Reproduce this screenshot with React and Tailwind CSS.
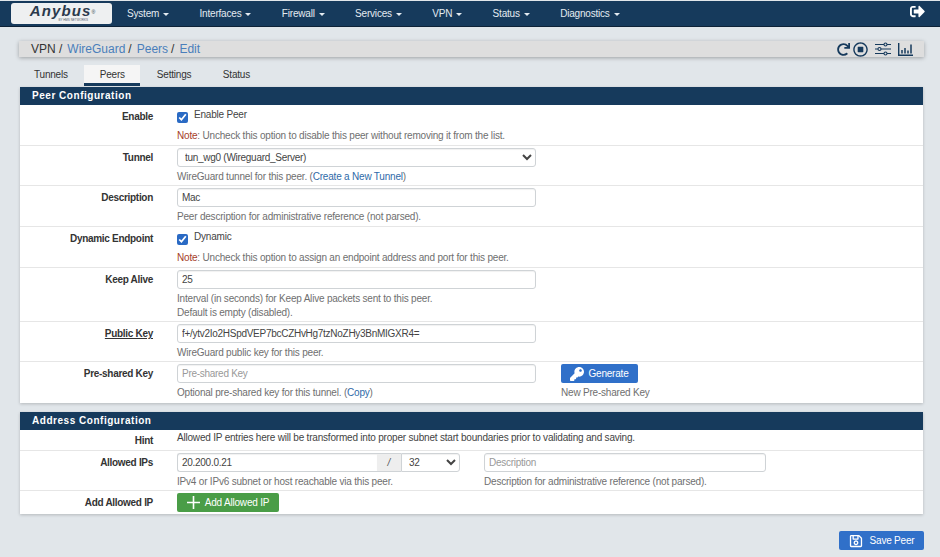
import { FaKey, FaRedo, FaRegSave, FaRegStopCircle, FaSignOutAlt } from "react-icons/fa";

const NAV = ["System", "Interfaces", "Firewall", "Services", "VPN", "Status", "Diagnostics"];
const TABS = ["Tunnels", "Peers", "Settings", "Status"];

const inputCls = "h-[19px] rounded-[3px] border border-[#cfd3d6] bg-white px-[4px] text-[10px] tracking-[-0.28px] text-[#444] shadow-[inset_0_1px_1px_rgba(0,0,0,0.06)] outline-none placeholder:text-[#999]";

function Help({ children }) {
  return <div className="mt-[3px] h-[14px] text-[10px] leading-[14px] tracking-[-0.2px] text-[#6f6f6f]">{children}</div>;
}

// pb: row bottom padding, the rows in the picture are not all the same height
function Row({ label, underline, children, last, pb = "pb-[2px]" }) {
  return (
    <div className={`flex ${last ? "" : "border-b border-[#e6e6e6]"}`}>
      <div className={`mt-[5px] w-[133px] shrink-0 text-right text-[10px] font-bold leading-[14px] tracking-[-0.3px] text-[#333] ${underline ? "underline" : ""}`}>
        {label}
      </div>
      <div className={`ml-[24px] min-w-0 flex-1 pt-[2px] ${pb}`}>{children}</div>
    </div>
  );
}

function Check({ label }) {
  return (
    <div className="flex h-[19px] items-start">
      <input type="checkbox" defaultChecked className="mt-[5px] h-[11px] w-[11px] accent-[#2a6ac4]" />
      <span className="ml-[6px] mt-[1px] text-[10px] leading-[14px] tracking-[-0.2px] text-[#444]">{label}</span>
    </div>
  );
}

function Note({ children }) {
  return <Help><span className="text-[#a5402a]">Note</span>: {children}</Help>;
}

function Heading({ children }) {
  return (
    <div className="h-[18px] border-b border-[#163a5c] bg-[#163a5c] pl-[12px] text-[10px] font-bold leading-[17px] tracking-[0.53px] text-white">
      {children}
    </div>
  );
}

function Sliders() {
  return (
    <svg width="16" height="14" viewBox="0 0 16 14" fill="none" stroke="#163a5c" strokeWidth="1.1">
      <path d="M0 2.5h9M12 2.5h4M0 7h3M6 7h10M0 11.5h9M12 11.5h4" />
      <circle cx="10.5" cy="2.5" r="1.5" />
      <circle cx="4.5" cy="7" r="1.5" />
      <circle cx="10.5" cy="11.5" r="1.5" />
    </svg>
  );
}

function Chart() {
  return (
    <svg width="15" height="13" viewBox="0 0 15 13" fill="none" stroke="#163a5c">
      <path d="M.7 0v12.2H15" strokeWidth="1.4" />
      <path d="M4 10.5V7M7 10.5V5M10 10.5V7.5M13 10.5V1.5" strokeWidth="1.5" />
    </svg>
  );
}

export default function App() {
  return (
    <div className="h-[557px] w-[940px] overflow-hidden bg-[#e1e6ea] font-['Liberation_Sans',Arial,sans-serif]">
      {/* top nav */}
      <div className="mt-[1px] flex h-[26px] items-start border-b border-[#0d2237] bg-[#163a5c] pt-[2px]">
        <div className="ml-[11px] flex h-[21px] w-[101px] flex-col items-center rounded-[3px] bg-[#eef0f1] pl-[3px]">
          <div className="text-[15px] font-bold italic leading-[15px] tracking-[1.1px] text-[#2b3a4c]">
            Anybus<sup className="text-[5px] font-normal">®</sup>
          </div>
          <div className="mt-[1px] self-end pr-[24px] text-[3px] leading-[3px] text-[#55606c]">BY HMS NETWORKS</div>
        </div>
        <div className="ml-[15px] flex gap-[30.4px] pt-[4px]">
          {NAV.map(n => (
            <div key={n} className="flex items-center text-[10px] leading-[14px] tracking-[-0.2px] text-[#e4ebf1]">
              {n}
              <span className="ml-[4px] mt-[1px] h-0 w-0 border-x-[3.5px] border-t-[3.5px] border-x-transparent border-t-[#e4ebf1]" />
            </div>
          ))}
        </div>
        <FaSignOutAlt className="ml-auto mr-[15px] mt-[1px] text-white" size={15} />
      </div>

      {/* breadcrumb */}
      <div className="ml-[19px] mt-[14px] flex h-[16px] w-[905px] items-center bg-[#dedede] pl-[12px] pr-[11px] text-[12px] shadow-[0_1px_4px_rgba(0,0,0,0.3)]">
        <span className="text-[#333]">VPN /</span>
        <span className="ml-[5px] text-[#4a7ebb]">WireGuard</span>
        <span className="ml-[3px] text-[#333]">/</span>
        <span className="ml-[5px] text-[#4a7ebb]">Peers</span>
        <span className="ml-[3px] text-[#333]">/</span>
        <span className="ml-[5px] text-[#4a7ebb]">Edit</span>
        <div className="ml-auto flex items-center text-[#163a5c]">
          <FaRedo size={13} />
          <FaRegStopCircle size={15} className="ml-[3px]" />
          <span className="ml-[7px]"><Sliders /></span>
          <span className="ml-[7px]"><Chart /></span>
        </div>
      </div>

      {/* tabs */}
      <div className="mb-[1px] ml-[19px] mt-[8px] flex h-[21px] gap-[1.5px] text-[10px] tracking-[-0.2px] text-[#333]">
        {TABS.map(t => (
          <div
            key={t}
            className={`pt-[3px] leading-[14px] ${t === "Peers" ? "w-[56px] border-b-[3px] border-[#163a5c] bg-[#f5f5f5] text-center" : "px-[15px]"}`}
          >
            {t}
          </div>
        ))}
      </div>

      {/* peer config */}
      <div className="ml-[20px] w-[903px] bg-white shadow-[0_1px_3px_rgba(0,0,0,0.2)]">
        <Heading>Peer Configuration</Heading>
        <Row label="Enable">
          <Check label="Enable Peer" />
          <Note>Uncheck this option to disable this peer without removing it from the list.</Note>
        </Row>
        <Row label="Tunnel" pb="pb-[1px]">
          <select className={`${inputCls} block w-[359px] pl-[3px]`} defaultValue="tun_wg0">
            <option value="tun_wg0">tun_wg0 (Wireguard_Server)</option>
          </select>
          <Help>WireGuard tunnel for this peer. (<span className="text-[#2f6aa8]">Create a New Tunnel</span>)</Help>
        </Row>
        <Row label="Description">
          <input className={`${inputCls} block w-[359px]`} defaultValue="Mac" />
          <Help>Peer description for administrative reference (not parsed).</Help>
        </Row>
        <Row label="Dynamic Endpoint">
          <Check label="Dynamic" />
          <Note>Uncheck this option to assign an endpoint address and port for this peer.</Note>
        </Row>
        <Row label="Keep Alive" pb="pb-[1px]">
          <input className={`${inputCls} block w-[359px]`} defaultValue="25" />
          <Help>Interval (in seconds) for Keep Alive packets sent to this peer.</Help>
          <div className="h-[14px] text-[10px] leading-[14px] tracking-[-0.2px] text-[#6f6f6f]">Default is empty (disabled).</div>
        </Row>
        <Row label="Public Key" underline pb="pb-[1px]">
          <input className={`${inputCls} block w-[359px]`} defaultValue="f+/ytv2Io2HSpdVEP7bcCZHvHg7tzNoZHy3BnMIGXR4=" />
          <Help>WireGuard public key for this peer.</Help>
        </Row>
        <Row label="Pre-shared Key" last pb="pb-[3px]">
          <div className="flex gap-[25px]">
            <div>
              <input className={`${inputCls} block w-[359px]`} placeholder="Pre-shared Key" />
              <Help>Optional pre-shared key for this tunnel. (<span className="text-[#2f6aa8]">Copy</span>)</Help>
            </div>
            <div>
              <button className="flex h-[19px] w-[77px] items-center justify-center gap-[4px] rounded-[2px] bg-[#3070c9] text-[10px] tracking-[-0.2px] text-white">
                <FaKey size={14} />
                Generate
              </button>
              <Help>New Pre-shared Key</Help>
            </div>
          </div>
        </Row>
      </div>

      {/* address config */}
      <div className="ml-[20px] mt-[9px] w-[903px] bg-white shadow-[0_1px_3px_rgba(0,0,0,0.2)]">
        <Heading>Address Configuration</Heading>
        <div className="flex h-[21px] border-b border-[#e6e6e6]">
          <div className="mt-[4px] w-[133px] text-right text-[10px] font-bold leading-[14px] tracking-[-0.3px] text-[#333]">Hint</div>
          <div className="ml-[24px] mt-[1px] text-[10px] leading-[14px] tracking-[-0.2px] text-[#444]">
            Allowed IP entries here will be transformed into proper subnet start boundaries prior to validating and saving.
          </div>
        </div>
        <Row label="Allowed IPs" pb="pb-[1px]">
          <div className="flex gap-[24px]">
            <div>
              <div className="flex">
                <input className={`${inputCls} w-[200px] rounded-r-none border-r-0`} defaultValue="20.200.0.21" />
                <div className="h-[19px] w-[24px] border-y border-[#cfd3d6] bg-[#eeeeee] text-center text-[10px] italic leading-[17px] text-[#555]">/</div>
                <select className={`${inputCls} w-[59px] rounded-l-none pl-[3px]`} defaultValue="32">
                  <option value="32">32</option>
                </select>
              </div>
              <Help>IPv4 or IPv6 subnet or host reachable via this peer.</Help>
            </div>
            <div>
              <input className={`${inputCls} block w-[282px]`} placeholder="Description" />
              <Help>Description for administrative reference (not parsed).</Help>
            </div>
          </div>
        </Row>
        <Row label="Add Allowed IP" last>
          <button className="flex h-[19px] w-[102px] items-center justify-center gap-[5px] rounded-[2px] bg-[#4a9d47] text-[10px] tracking-[-0.2px] text-white">
            <svg width="13" height="13" viewBox="0 0 13 13" stroke="#fff" strokeWidth="1.6"><path d="M6.5 0v13M0 6.5h13" /></svg>
            Add Allowed IP
          </button>
        </Row>
      </div>

      {/* save */}
      <div className="mt-[17px] flex w-[924px] justify-end">
        <button className="flex h-[19px] w-[85px] items-center justify-center gap-[7px] rounded-[2px] bg-[#3070c9] text-[10px] tracking-[-0.2px] text-white">
          <FaRegSave size={14} />
          Save Peer
        </button>
      </div>
    </div>
  );
}
